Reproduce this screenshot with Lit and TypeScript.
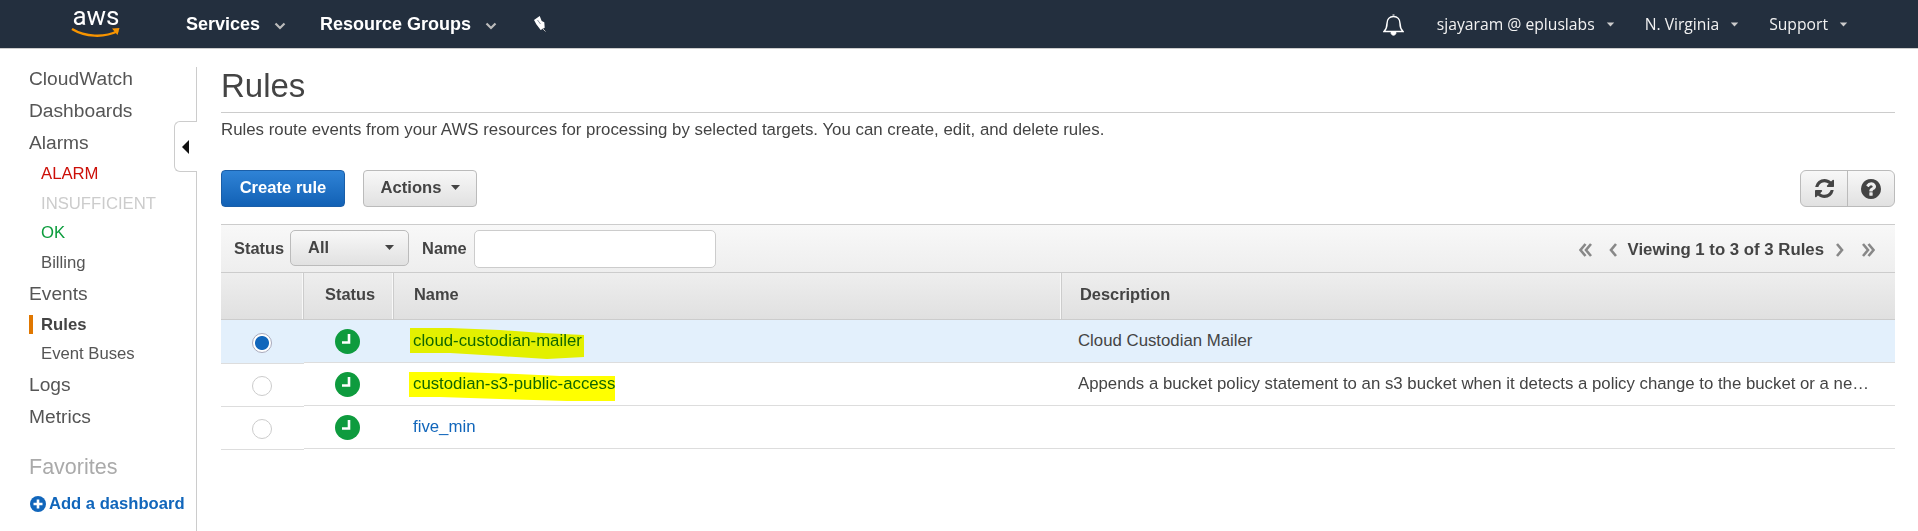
import { LitElement, css, html, svg } from 'lit'
import { customElement } from 'lit/decorators.js'

const caret = html`<svg class="caret" width="11" height="7" viewBox="0 0 11 7"><path d="M1 1h9L5.500 6z" fill="currentColor"/></svg>`

const clock = html`<svg width="25" height="25" viewBox="0 0 25 25">
  <circle cx="12.500" cy="12.500" r="12.500" fill="#0e9b3e"/>
  <path d="M14 5v8.500H7" fill="none" stroke="#fff" stroke-width="2.600"/>
</svg>`

const sideItems = [
  { label: 'CloudWatch', cls: 'main' },
  { label: 'Dashboards', cls: 'main' },
  { label: 'Alarms', cls: 'main' },
  { label: 'ALARM', cls: 'sub alarm' },
  { label: 'INSUFFICIENT', cls: 'sub insufficient' },
  { label: 'OK', cls: 'sub ok' },
  { label: 'Billing', cls: 'sub' },
  { label: 'Events', cls: 'main' },
  { label: 'Rules', cls: 'sub active' },
  { label: 'Event Buses', cls: 'sub' },
  { label: 'Logs', cls: 'main' },
  { label: 'Metrics', cls: 'main' },
]

// mark is the hand-drawn yellow highlighter stroke, in cell coordinates
const rules = [
  {
    name: 'cloud-custodian-mailer',
    desc: 'Cloud Custodian Mailer',
    selected: true,
    mark: '16,8 56,8 106,10 149,13 190,15 190,37 153,39 106,36 56,33 16,33',
  },
  {
    name: 'custodian-s3-public-access',
    desc: 'Appends a bucket policy statement to an s3 bucket when it detects a policy change to the bucket or a ne…',
    selected: false,
    mark: '15,9 63,9 123,11 166,13 221,13 221,38 173,38 106,36 46,34 15,34',
  },
  { name: 'five_min', desc: '', selected: false, mark: '' },
]

@customElement('app-root')
export class AppRoot extends LitElement {
  static styles = css`
    :host {
      display: block;
      width: 1918px;
      height: 531px;
      overflow: hidden;
      background: #fff;
      font-family: "Liberation Sans", Arial, sans-serif;
      color: #444;
    }

    .nav {
      height: 48px;
      box-sizing: content-box;
      background: #232f3e;
      border-bottom: 1px solid #ccc;
      display: flex;
      align-items: center;
      color: #fff;
    }

    .logo {
      width: 50px;
      margin-left: 71px;
      height: 40px;
      flex: none;
    }

    .logo span {
      display: block;
      text-align: center;
      font: 26px/22px Roboto, sans-serif;
      margin-top: 1px;
    }

    .logo svg {
      display: block;
      margin-top: 0;
    }

    .top-menu {
      font-size: 18px;
      font-weight: bold;
      display: flex;
      align-items: center;
      margin-left: 65px;
      color: #fff;
    }

    .top-menu + .top-menu {
      margin-left: 34px;
    }

    .top-menu svg {
      margin-left: 14px;
      margin-top: 3px;
    }

    .pin {
      margin-left: 37px;
    }

    .nav-right {
      margin-left: auto;
      display: flex;
      align-items: center;
      padding-right: 70px;
      font: 15.700px "Open Sans", sans-serif;
      color: #f2f2f2;
    }

    .nav-right .bell {
      margin-right: 33px;
    }

    .nav-right .caret {
      color: #ccc;
      margin-left: 11px;
      width: 9px;
    }

    .nav-right .menu {
      display: flex;
      align-items: center;
      margin-right: 30px;
    }

    .nav-right .menu:last-child {
      margin-right: 0;
    }

    .page {
      display: flex;
      height: 482px;
    }

    .side {
      width: 197px;
      flex: none;
      box-sizing: border-box;
      margin-top: 18px;
      padding: 0 0 0 29px;
      border-right: 1px solid #ccc;
      position: relative;
    }

    .side-list {
      margin-top: -4px;
    }

    .side-row {
      display: flex;
      align-items: center;
      white-space: nowrap;
    }

    .main {
      height: 32px;
      font-size: 19.200px;
      color: #555;
    }

    .sub {
      height: 29.700px;
      font-size: 16.700px;
      padding-left: 12px;
      color: #555;
    }

    .alarm { color: #cc0f08; }
    .insufficient { color: #ccc; }
    .ok { color: #0b9c3c; }

    .active {
      font-weight: bold;
      color: #444;
      position: relative;
    }

    .active::before {
      content: '';
      position: absolute;
      left: 0;
      top: 5px;
      width: 4px;
      height: 19px;
      background: #e07700;
    }

    .favorites {
      font-size: 21.500px;
      color: #aaa;
      margin-top: 20px;
      line-height: 28px;
    }

    .add {
      display: flex;
      align-items: center;
      gap: 3px;
      margin-top: 13px;
      margin-left: 1px;
      font-size: 16.600px;
      font-weight: bold;
      color: #1166bb;
      white-space: nowrap;
    }

    .collapse {
      position: absolute;
      right: -1px;
      top: 54px;
      width: 23px;
      height: 51px;
      box-sizing: border-box;
      background: #fff;
      border: 1px solid #ccc;
      border-right: 0;
      border-radius: 6px 0 0 6px;
      display: flex;
      align-items: center;
      justify-content: center;
    }

    .content {
      flex: 1;
      min-width: 0;
      padding: 0 23px 0 24px;
    }

    h1 {
      margin: 0;
      font-size: 33px;
      font-weight: normal;
      line-height: 38px;
      padding-top: 18px;
      padding-bottom: 7px;
      color: #444;
      border-bottom: 1px solid #ccc;
    }

    .intro {
      margin: 8px 0 0;
      font-size: 16.840px;
      line-height: 18px;
      color: #444;
    }

    .actions {
      display: flex;
      margin-top: 31px;
      height: 37px;
    }

    .btn {
      box-sizing: border-box;
      height: 37px;
      border-radius: 4px;
      display: flex;
      align-items: center;
      justify-content: center;
      padding-bottom: 2px;
      font-size: 16.600px;
      font-weight: bold;
    }

    .primary {
      width: 124px;
      color: #fff;
      background: linear-gradient(#2f83d6, #1261b5);
      border: 1px solid #1a5ea8;
    }

    .secondary {
      width: 114px;
      margin-left: 18px;
      gap: 9px;
      padding-left: 2px;
      color: #444;
      background: linear-gradient(#f8f8f8, #e1e1e1);
      border: 1px solid #bbb;
    }

    .tools {
      margin-left: auto;
      width: 95px;
      display: flex;
      box-sizing: border-box;
      border: 1px solid #bbb;
      border-radius: 6px;
      background: linear-gradient(#f8f8f8, #e1e1e1);
    }

    .tools div {
      flex: 1;
      display: flex;
      align-items: center;
      justify-content: center;
    }

    .tools div + div {
      border-left: 1px solid #bbb;
    }

    .filters {
      margin-top: 17px;
      height: 47px;
      box-sizing: content-box;
      border-top: 1px solid #ccc;
      border-bottom: 1px solid #ccc;
      background: linear-gradient(#f8f8f8, #eee);
      display: flex;
      align-items: center;
      font-size: 16.400px;
      font-weight: bold;
      color: #444;
    }

    .filters .label-status { margin-left: 13px; margin-top: -1px; }

    .select {
      width: 119px;
      height: 36px;
      margin-left: 6px;
      margin-top: -1px;
      box-sizing: border-box;
      border: 1px solid #bbb;
      border-radius: 5px;
      background: linear-gradient(#f8f8f8, #e1e1e1);
      display: flex;
      align-items: center;
      justify-content: space-between;
      padding: 0 13px 2px 17px;
    }

    .label-name { margin-left: 13px; margin-top: -1px; }

    .input {
      width: 242px;
      height: 38px;
      margin-left: 7px;
      margin-top: 1px;
      box-sizing: border-box;
      border: 1px solid #ccc;
      border-radius: 5px;
      background: #fff;
    }

    .pager {
      margin-left: auto;
      display: flex;
      align-items: center;
      padding: 2px 20px 0 0;
      color: #888;
      font-size: 16.800px;
    }

    .pager span {
      color: #444;
      margin: 0 12px 0 11px;
    }

    .table {
      display: grid;
      grid-template-columns: 83px 90px 668px 1fr;
    }

    .head {
      height: 47px;
      box-sizing: border-box;
      border-bottom: 1px solid #ccc;
      background: linear-gradient(#eee, #e0e0e0);
      border-right: 1px solid #ccc;
      box-shadow: inset -1px 0 0 #f8f8f8;
      display: flex;
      align-items: center;
      font-size: 16.400px;
      font-weight: bold;
      color: #444;
      padding-left: 20px;
      padding-bottom: 3px;
    }

    .head.status { padding-left: 21px; }
    .head.description { padding-left: 18px; border-right: 0; box-shadow: none; }

    .cell {
      height: 43px;
      box-sizing: border-box;
      border-bottom: 1px solid #ddd;
      display: flex;
      align-items: center;
      font-size: 16.800px;
      color: #444;
      min-width: 0;
      position: relative;
    }

    .cell.sel { background: #e3f0fc; }

    .cell.radio {
      justify-content: center;
      padding-right: 1px;
      padding-top: 2px;
      border-bottom: 0;
      box-shadow: 0 1px 0 #ddd;
    }

    .cell.clock { justify-content: center; padding-right: 3px; }
    .cell.name { padding-left: 19px; color: #1166bb; }

    .cell.desc {
      padding-left: 16px;
      white-space: nowrap;
    }

    .dot {
      width: 20px;
      height: 20px;
      box-sizing: border-box;
      border-radius: 50%;
      border: 1px solid #ccc;
      background: #fff;
    }

    .dot.on {
      border: 1px solid #aab;
      background: radial-gradient(circle, #1166bb 0 6.500px, #fff 7.500px);
    }

    .mark {
      position: absolute;
      left: 0;
      top: 0;
      mix-blend-mode: multiply;
      pointer-events: none;
    }
  `

  render() {
    return html`
      <div class="nav">
        <div class="logo">
          <span>aws</span>
          <svg width="50" height="12" viewBox="0 0 50 12">
            <path d="M1 2c13 8 32 9 46 2" fill="none" stroke="#f79400" stroke-width="2.400"/>
            <path d="M41 1.500l7.500-.5-2 7z" fill="#f79400"/>
          </svg>
        </div>
        <div class="top-menu">Services${this.chevron()}</div>
        <div class="top-menu">Resource Groups${this.chevron()}</div>
        <svg class="pin" width="13" height="16" viewBox="0 0 13 16">
          <path d="M0 4L5.700 0l2 5 2.600 1.300.400 5.400-4 2.300-4.400-5.700z" fill="#fff"/>
          <path d="M3.500 4l3 4" stroke="#8a93a0" stroke-width="1"/>
          <path d="M8.500 12.500l3 3" stroke="#bbb" stroke-width="1"/>
        </svg>
        <div class="nav-right">
          <svg class="bell" width="21" height="23" viewBox="0 0 21 23">
            <path d="M1 18.500c2-2 3-4 3-8 0-4 2.500-7 6.500-7s6.500 3 6.500 7c0 4 1 6 3 8z" fill="none" stroke="#fff" stroke-width="1.500"/>
            <path d="M9.500 2h2M8 19.500c0 3.500 5 3.500 5 0z" fill="#fff" stroke="#fff"/>
          </svg>
          <div class="menu">sjayaram @ epluslabs${caret}</div>
          <div class="menu">N. Virginia${caret}</div>
          <div class="menu">Support${caret}</div>
        </div>
      </div>
      <div class="page">
        <div class="side">
          <div class="side-list">
            ${sideItems.map((it) => html`<div class="side-row ${it.cls}">${it.label}</div>`)}
          </div>
          <div class="favorites">Favorites</div>
          <div class="add">
            <svg width="16" height="16" viewBox="0 0 16 16">
              <circle cx="8" cy="8" r="8" fill="#1166bb"/>
              <path d="M8 3.500v9M3.500 8h9" stroke="#fff" stroke-width="2.600"/>
            </svg>
            Add a dashboard
          </div>
          <div class="collapse">
            <svg width="8" height="14" viewBox="0 0 8 14"><path d="M7 0v14L0 7z" fill="#111"/></svg>
          </div>
        </div>
        <div class="content">
          <h1>Rules</h1>
          <p class="intro">Rules route events from your AWS resources for processing by selected targets. You can create, edit, and delete rules.</p>
          <div class="actions">
            <div class="btn primary">Create rule</div>
            <div class="btn secondary">Actions ${caret}</div>
            <div class="tools">
              <div>
                <svg width="19" height="19" viewBox="0 0 1536 1536">
                  <path fill="#444" d="M1511 928q0 5-1 7-64 268-268 434.500t-478 166.500q-146 0-282.500-55t-243.500-157l-129 129q-19 19-45 19t-45-19-19-45v-448q0-26 19-45t45-19h448q26 0 45 19t19 45-19 45l-137 137q71 66 161 102t187 36q134 0 250-65t186-179q11-17 53-117 8-23 30-23h192q13 0 22.500 9.500t9.500 22.500zm25-800v448q0 26-19 45t-45 19h-448q-26 0-45-19t-19-45 19-45l138-138q-148-137-349-137-134 0-250 65t-186 179q-11 17-53 117-8 23-30 23h-199q-13 0-22.500-9.500t-9.500-22.500v-7q65-268 270-434.500t480-166.500q146 0 284 55.500t245 156.500l130-129q19-19 45-19t45 19 19 45z"/>
                </svg>
              </div>
              <div>
                <svg width="20" height="20" viewBox="0 128 1536 1536">
                  <path fill="#444" d="M896 1376v-192q0-14-9-23t-23-9h-192q-14 0-23 9t-9 23v192q0 14 9 23t23 9h192q14 0 23-9t9-23zm256-672q0-88-55.500-163t-138.500-116-170-41q-243 0-371 213-15 24 8 42l132 100q7 6 19 6 16 0 25-12 53-68 86-92 34-24 86-24 48 0 85.500 26t37.500 59q0 38-20 61t-68 45q-63 28-115.500 86.500t-52.500 125.500v36q0 14 9 23t23 9h192q14 0 23-9t9-23q0-19 21.500-49.500t54.500-49.500q32-18 49-28.500t46-35 44.500-48 28-60.500 12.500-81zm384 192q0 209-103 385.500t-279.500 279.500-385.500 103-385.500-103-279.500-279.500-103-385.500 103-385.500 279.500-279.500 385.500-103 385.500 103 279.500 279.500 103 385.500z"/>
                </svg>
              </div>
            </div>
          </div>
          <div class="filters">
            <div class="label-status">Status</div>
            <div class="select">All ${caret}</div>
            <div class="label-name">Name</div>
            <div class="input"></div>
            <div class="pager">
              ${this.pageIcon('M6.500 1L1.500 7l5 6M12 1L7 7l5 6', 13)}
              <svg width="17" height="12"></svg>
              ${this.pageIcon('M7 1L2 7l5 6', 8)}
              <span>Viewing 1 to 3 of 3 Rules</span>
              ${this.pageIcon('M1 1l5 6-5 6', 8)}
              <svg width="18" height="12"></svg>
              ${this.pageIcon('M1 1l5 6-5 6M6.500 1l5 6-5 6', 13)}
            </div>
          </div>
          <div class="table">
            <div class="head"></div>
            <div class="head status">Status</div>
            <div class="head">Name</div>
            <div class="head description">Description</div>
            ${rules.map((r) => html`
              <div class="cell radio ${r.selected ? 'sel' : ''}"><div class="dot ${r.selected ? 'on' : ''}"></div></div>
              <div class="cell clock ${r.selected ? 'sel' : ''}">${clock}</div>
              <div class="cell name ${r.selected ? 'sel' : ''}">
                ${r.name}
                ${r.mark ? html`<svg class="mark" width="240" height="42">${svg`<polygon points=${r.mark} fill="#ff0"/>`}</svg>` : ''}
              </div>
              <div class="cell desc ${r.selected ? 'sel' : ''}">${r.desc}</div>
            `)}
          </div>
        </div>
      </div>
    `
  }

  private chevron() {
    return html`<svg width="12" height="8" viewBox="0 0 12 8"><path d="M1.500 1.500L6 6l4.500-4.500" fill="none" stroke="#bbb" stroke-width="2.200"/></svg>`
  }

  private pageIcon(d: string, w: number) {
    return html`<svg width=${w} height="14" viewBox="0 0 ${w} 14"><path d=${d} fill="none" stroke="#888" stroke-width="2.600"/></svg>`
  }
}
